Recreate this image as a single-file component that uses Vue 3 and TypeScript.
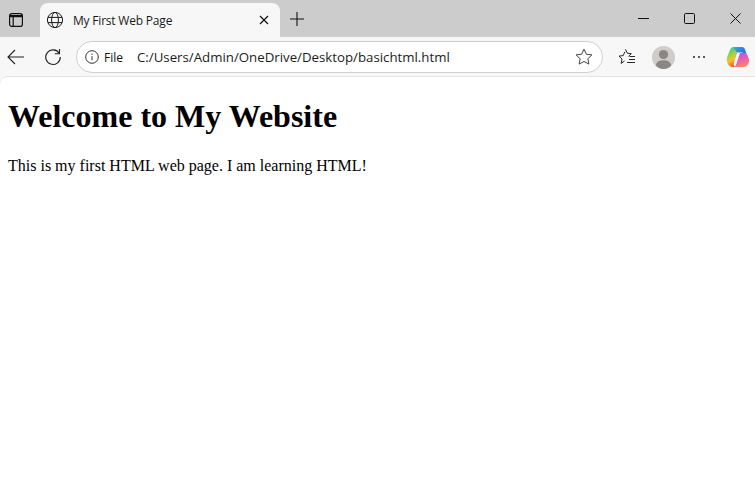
<script setup lang="ts">
const title: string = 'My First Web Page'
const url: string = 'C:/Users/Admin/OneDrive/Desktop/basichtml.html'
</script>

<template>
  <div class="window">
    <header class="tabstrip">
      <button class="strip-btn">
        <svg width="16" height="16" viewBox="0 0 16 16" fill="none" stroke="#111" stroke-width="1.2">
          <rect x="1.6" y="1.6" width="12.8" height="12.8" rx="2.2" />
          <path d="M2 3.6h12M2 4.6h12M5.2 4.6v9.6" />
        </svg>
      </button>
      <div class="tab">
        <svg class="globe" width="18" height="18" viewBox="0 0 18 18" fill="none" stroke="#1a1a1a" stroke-width="1">
          <circle cx="9" cy="9" r="7.6" />
          <ellipse cx="9" cy="9" rx="3.4" ry="7.6" />
          <path d="M2 6.4h14M2 11.6h14" />
        </svg>
        <span class="tab-title">{{ title }}</span>
        <svg class="tab-close" width="10" height="10" viewBox="0 0 10 10" stroke="#111" stroke-width="1.2">
          <path d="M1 1l8 8M9 1l-8 8" />
        </svg>
      </div>
      <button class="new-tab">
        <svg width="14" height="14" viewBox="0 0 14 14" stroke="#111" stroke-width="1.1">
          <path d="M7 0v14M0 7h14" />
        </svg>
      </button>
      <div class="caption">
        <button class="cap-btn">
          <svg width="11" height="11" viewBox="0 0 11 11" stroke="#111" stroke-width="1"><path d="M0 5.5h11" /></svg>
        </button>
        <button class="cap-btn">
          <svg width="11" height="11" viewBox="0 0 11 11" fill="none" stroke="#111" stroke-width="1"><rect x=".5" y=".5" width="10" height="10" rx="1.2" /></svg>
        </button>
        <button class="cap-btn">
          <svg width="11" height="11" viewBox="0 0 11 11" stroke="#111" stroke-width="1"><path d="M.5.5l10 10M10.500.5l-10 10" /></svg>
        </button>
      </div>
    </header>

    <nav class="toolbar">
      <button class="tool-btn back">
        <svg width="18" height="16" viewBox="0 0 18 16" fill="none" stroke="#222" stroke-width="1.1">
          <path d="M1 8h16M8 1L1 8l7 7" />
        </svg>
      </button>
      <button class="tool-btn reload">
        <svg width="18" height="18" viewBox="0 0 18 18" fill="none" stroke="#222" stroke-width="1.1">
          <path d="M15.300 5.500A7.300 7.300 0 1 0 16.300 9" />
          <path d="M15.500 1v4.700h-4.700" />
        </svg>
      </button>
      <div class="address">
        <svg class="info" width="14" height="14" viewBox="0 0 14 14" fill="none" stroke="#333" stroke-width="1">
          <circle cx="7" cy="7" r="6.300" />
          <path d="M7 6.200v4M7 3.500v1.300" />
        </svg>
        <span class="scheme">File</span>
        <span class="url">{{ url }}</span>
        <svg class="star" width="18" height="18" viewBox="0 0 18 18" fill="none" stroke="#444" stroke-width="1" stroke-linejoin="round">
          <path d="M9 1.200l2.400 5 5.500.7-4 3.800 1 5.400L9 13.500l-4.900 2.600 1-5.400-4-3.800 5.500-.7z" />
        </svg>
      </div>
      <button class="tool-btn fav">
        <svg width="18" height="18" viewBox="0 0 18 18" fill="none" stroke="#111" stroke-width="0.9" stroke-linejoin="round">
          <path d="M7.500 1.300l1.800 3.900 4 .5-2.800 2.700M6.500 13l-3.300 2.400.8-4.400-3-2.900 4.200-.5 1.800-3.900" />
          <path d="M11.500 8.500h5.500M11 11.500h6M9 14.500h8" />
        </svg>
      </button>
      <div class="avatar">
        <svg width="23" height="23" viewBox="0 0 23 23">
          <circle cx="11.500" cy="11.500" r="11.500" fill="#cfccc9" />
          <circle cx="11.500" cy="8.500" r="4.600" fill="#8a8683" />
          <path d="M3.800 19.500C4.500 15.500 8 14.300 11.500 14.300s7 1.200 7.700 5.200A11 11 0 0 1 11.500 23a11 11 0 0 1-7.700-3.500z" fill="#8a8683" />
        </svg>
      </div>
      <button class="tool-btn more">
        <span class="dot"></span><span class="dot"></span><span class="dot"></span>
      </button>
      <div class="copilot">
        <svg width="24" height="24" viewBox="0 0 24 24">
          <defs>
            <linearGradient id="cpA" x1="0" y1="0" x2="1" y2="0.800">
              <stop offset="0" stop-color="#27b5e8" />
              <stop offset="1" stop-color="#2a5be0" />
            </linearGradient>
            <linearGradient id="cpB" x1="0.300" y1="0" x2="0.600" y2="1">
              <stop offset="0" stop-color="#2bc4a8" />
              <stop offset="0.350" stop-color="#8fd44a" />
              <stop offset="0.650" stop-color="#fbc02d" />
              <stop offset="1" stop-color="#f4511e" />
            </linearGradient>
            <linearGradient id="cpC" x1="0.300" y1="0" x2="0.600" y2="1">
              <stop offset="0" stop-color="#a55be8" />
              <stop offset="0.500" stop-color="#ec5fb0" />
              <stop offset="1" stop-color="#fb8a50" />
            </linearGradient>
          </defs>
          <path d="M7 2H16c1.500 0 2.500 1 3 2.500L20.500 9 16 7.500h-5L9 13 6 8z" fill="url(#cpA)" />
          <path d="M7 2C5.500 2.500 4.500 3.500 4 5L1.500 11C.5 14 .7 16 1.500 18 2.500 20.500 4.500 22 7 22H9C8 21 7.500 19.500 8 17.500L11 7.500z" fill="url(#cpB)" />
          <path d="M14 8H18C20 8 21 9 21.500 10.500L23 14.500C23.500 17.500 21.500 22 17.500 22H8C9 21.500 10 20 10.500 18.500L13.500 9.500z" fill="url(#cpC)" />
        </svg>
      </div>
    </nav>

    <main class="page">
      <h1>Welcome to My Website</h1>
      <p>This is my first HTML web page. I am learning HTML!</p>
    </main>
  </div>
</template>

<style>
html, body { margin: 0; background: #fff; overflow: hidden; }
</style>

<style scoped>
.window {
  width: 755px;
  height: 487px;
  display: flex;
  flex-direction: column;
  overflow: hidden;
  background: #f7f7f7;
  font-family: "Open Sans", "Noto Sans", sans-serif;
  color: #111;
}
button {
  border: 0;
  padding: 0;
  background: none;
  display: flex;
  align-items: center;
  justify-content: center;
}
.tabstrip {
  height: 37px;
  flex: none;
  display: flex;
  background: #cccccc;
  box-sizing: border-box;
  padding-top: 3px;
}
.strip-btn {
  width: 40px;
  height: 34px;
  padding-right: 8px;
  box-sizing: border-box;
}
.tab {
  width: 240px;
  height: 34px;
  background: #f7f7f7;
  border-radius: 8px 8px 0 0;
  display: flex;
  align-items: center;
  padding: 0 11px 0 6px;
  box-sizing: border-box;
}
.globe { flex: none; }
.tab-title {
  margin-left: 9px;
  flex: 1;
  font-size: 12px;
  letter-spacing: -0.2px;
  color: #1a1a1a;
}
.new-tab {
  width: 34px;
  height: 32px;
}
.caption {
  margin-left: auto;
  display: flex;
  margin-top: -1px;
  margin-right: -3px;
}
.cap-btn {
  width: 46px;
  height: 32px;
}
.toolbar {
  height: 40px;
  flex: none;
  display: flex;
  align-items: center;
  padding: 0 6px 0 0;
  box-sizing: border-box;
}
.tool-btn { height: 32px; flex: none; }
.back { width: 32px; }
.reload { width: 41px; margin-right: 3px; padding-left: 0; }
.address {
  width: 527px;
  height: 32px;
  flex: none;
  box-sizing: border-box;
  background: #fff;
  border: 1px solid #cfcfcf;
  border-radius: 16px;
  display: flex;
  align-items: center;
  padding: 0 9px 0 8px;
}
.info { flex: none; }
.scheme {
  margin-left: 5px;
  font-size: 12px;
  width: 33px;
  flex: none;
  color: #111;
}
.url {
  flex: 1;
  font-size: 13.25px;
  color: #1c1c1c;
}
.star { flex: none; }
.fav { width: 18px; margin-left: 15px; }
.avatar {
  margin-left: 16px;
  width: 23px;
  height: 23px;
  flex: none;
  display: flex;
}
.more {
  width: 16px;
  margin-left: 16px;
  gap: 3px;
}
.dot {
  width: 2px;
  height: 2px;
  border-radius: 50%;
  background: #222;
}
.copilot {
  margin-left: 19px;
  width: 24px;
  height: 24px;
  flex: none;
  display: flex;
}
.page {
  flex: 1;
  background: #fff;
  border-top: 1px solid #e4e4e4;
  border-radius: 8px 0 0 0;
  margin-top: -1px;
  padding: 8px;
  font-family: "Liberation Serif", serif;
  color: #000;
  display: flow-root;
}
h1 {
  font-size: 32px;
  font-weight: 700;
  margin: 13.44px 0 21.44px;
}
p {
  font-size: 16px;
  margin: 16px 0;
}
</style>
